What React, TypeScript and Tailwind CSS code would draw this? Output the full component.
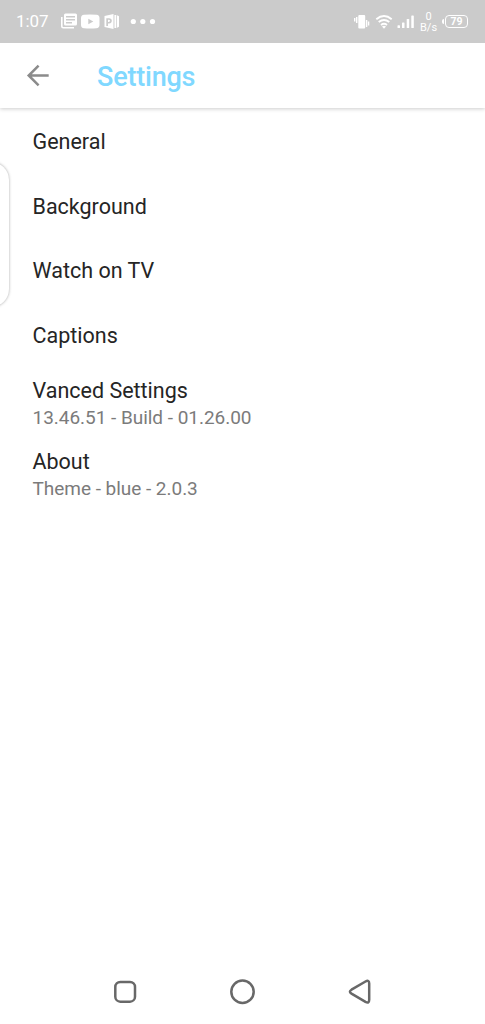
type SettingsItem = {
  title: string;
  summary?: string;
};

const items: SettingsItem[] = [
  { title: "General" },
  { title: "Background" },
  { title: "Watch on TV" },
  { title: "Captions" },
  { title: "Vanced Settings", summary: "13.46.51 - Build - 01.26.00" },
  { title: "About", summary: "Theme - blue - 2.0.3" },
];

function NotificationIcons() {
  return (
    <svg width="98" height="18" viewBox="60 13 98 18" fill="#fff" className="ml-3 shrink-0">
      {/* news */}
      <path
        fillRule="evenodd"
        d="M65.500 13.500h10a1.500 1.500 0 0 1 1.500 1.500v9a1.500 1.500 0 0 1-1.500 1.500h-10A1.500 1.500 0 0 1 64 24v-9a1.500 1.500 0 0 1 1.500-1.500zM66 16v1.500h9V16zM66 19v1.500h9V19zM66 22v1.500h6V22z"
      />
      <path d="M61.800 17v9.300a1.500 1.500 0 0 0 1.500 1.500H74" fill="none" stroke="#fff" strokeWidth="1.600" />
      {/* video */}
      <path
        fillRule="evenodd"
        d="M84 14.800q6-.6 12.500 0Q99.500 15 99.500 18v7q0 3-3.200 3.200-6 .5-12.300 0Q81 28 81 25v-7q0-3 3-3.200zM88.300 18.700v5.600l5-2.800z"
      />
      {/* presentation */}
      <path
        fillRule="evenodd"
        d="M104.500 16l9-2v15l-9-2zM106.300 18.300v7.600h1.700v-2.500h1q2.800-.1 2.800-2.600 0-2.500-2.800-2.500zM108 19.700h.8q1.200 0 1.200 1.100t-1.200 1.200h-.8z"
      />
      <path d="M114.400 15h1.900v13h-1.900zM117 15.200l2 1v10.600l-2 1z" />
      {/* more */}
      <circle cx="133.300" cy="21.500" r="2.600" />
      <circle cx="142.800" cy="21.500" r="2.600" />
      <circle cx="152.500" cy="21.500" r="2.600" />
    </svg>
  );
}

function SignalIcons() {
  return (
    <svg width="62" height="18" viewBox="353 13 62 18" fill="#fff" className="shrink-0">
      {/* vibrate */}
      <rect x="358.300" y="15" width="6.900" height="13.500" rx="1" />
      <path d="M356.700 17v6M354.700 18v3.500M366.600 20v7M368.600 21.500v4" stroke="#fff" strokeWidth="1.400" />
      {/* wifi */}
      <g fill="none" stroke="#fff" strokeWidth="1.900">
        <path d="M376.300 19.300q7.700-6.400 15.400 0" />
        <path d="M378.700 22.100q5.300-4.300 10.600 0" />
        <path d="M381 24.900q3-2.300 6 0" />
      </g>
      <path d="M382 26.500q2-1.300 4 0l-2 2.200z" />
      {/* mobile signal */}
      <rect x="397.500" y="25.300" width="2.500" height="2.700" rx=".6" />
      <rect x="402" y="22.500" width="2.500" height="5.500" rx=".6" />
      <rect x="406.700" y="19" width="2.500" height="9" rx=".6" />
      <rect x="411.300" y="15.500" width="2.500" height="12.500" rx=".6" />
    </svg>
  );
}

function StatusBar() {
  return (
    <header className="z-10 flex h-[43px] shrink-0 items-center bg-[#cbcbcb] pl-4 text-white">
      <span className="w-8 text-[17px] leading-none tracking-[-0.1px]">1:07</span>
      <NotificationIcons />
      <div className="ml-auto flex items-center pr-[17px]">
        <SignalIcons />
        <div className="ml-[5px] w-[17px] text-center text-[11px] leading-[11px]">
          <div>0</div>
          <div className="whitespace-nowrap">B/s</div>
        </div>
        <div className="ml-[5px] flex items-center gap-px">
          <div className="h-[5px] w-[2px] rounded-l bg-white" />
          <div className="flex h-[13px] w-[23px] items-center justify-center rounded-[4px] border border-white pt-px text-[10.500px] font-bold leading-none">
            79
          </div>
        </div>
      </div>
    </header>
  );
}

function Toolbar() {
  return (
    <div className="flex h-[65px] shrink-0 items-center shadow-[0_1px_4px_rgba(0,0,0,0.2)]">
      <button aria-label="Back" className="ml-[26px]">
        <svg width="24" height="24" viewBox="26 64 24 24" fill="none" stroke="#8b8b8b" strokeWidth="2.500">
          <path d="M48.700 75.500H28.500M38.600 65.700l-9.900 9.800 9.900 9.800" />
        </svg>
      </button>
      <h1 className="ml-[47px] pt-[2px] text-[27px] font-medium leading-8 tracking-[-0.200px] text-[#80d8ff]">
        Settings
      </h1>
    </div>
  );
}

function SettingsRow({ title, summary }: SettingsItem) {
  if (!summary) {
    return (
      <li className="flex h-[64.700px] items-center">
        <span className="text-[21.500px] leading-[25px]">{title}</span>
      </li>
    );
  }

  return (
    <li className="flex h-[71px] flex-col pt-[9px]">
      <span className="text-[21.500px] leading-[27px]">{title}</span>
      <span className="text-[19px] leading-7 tracking-[-0.030px] text-[#7b7b7b]">{summary}</span>
    </li>
  );
}

function NavigationBar() {
  return (
    <nav className="flex h-16 shrink-0 items-center">
      <svg width="485" height="64" viewBox="0 960 485 64" fill="none" stroke="#686868" strokeWidth="2.500">
        <rect x="115.300" y="982" width="19.700" height="19.700" rx="5" />
        <circle cx="242.500" cy="991.700" r="11.200" />
        <path
          d="M351.500 989.700l14-8.200q3.700-2 3.700 2v16.300q0 4-3.700 2l-14-8.200q-3.200-2 0-3.900z"
          strokeLinejoin="round"
        />
      </svg>
    </nav>
  );
}

export default function App() {
  return (
    <div className="relative flex h-screen w-full flex-col overflow-hidden bg-white font-['Roboto',sans-serif]">
      <StatusBar />
      <Toolbar />
      <ul className="flex-1 pl-[32.500px] pt-px text-[#252525]">
        {items.map((item) => (
          <SettingsRow key={item.title} {...item} />
        ))}
      </ul>
      <NavigationBar />

      {/* edge panel handle */}
      <div className="absolute -left-10 top-[162px] h-[145px] w-[49px] rounded-[18px] bg-white shadow-[0_0_3px_rgba(0,0,0,0.35)]" />
    </div>
  );
}
